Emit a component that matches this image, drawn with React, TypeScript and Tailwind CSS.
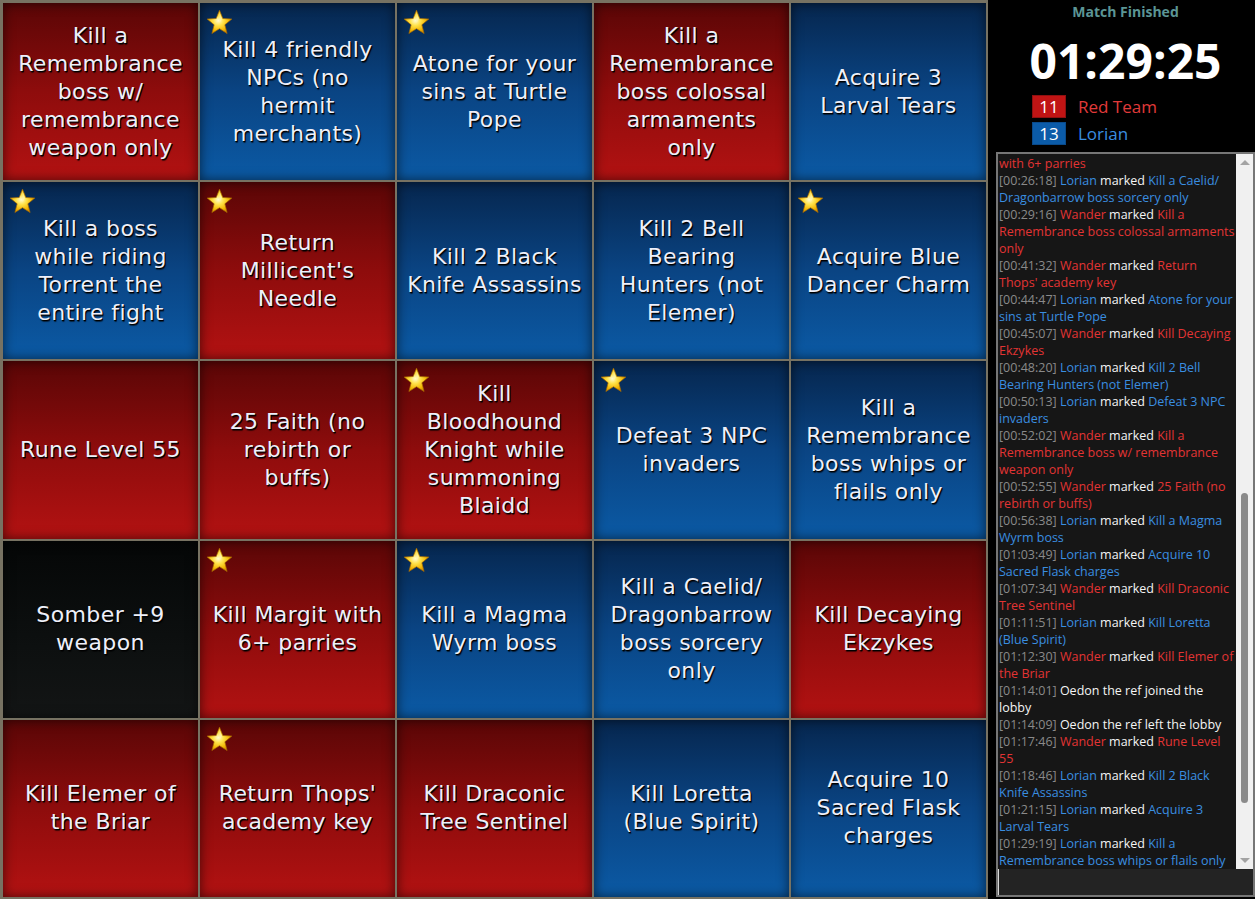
import React from "react";

type Cell = { t: string[]; c: "r" | "b" | "k"; s?: boolean };

const cells: Cell[] = [
  { t: ["Kill a", "Remembrance", "boss w/", "remembrance", "weapon only"], c: "r" },
  { t: ["Kill 4 friendly", "NPCs (no", "hermit", "merchants)"], c: "b", s: true },
  { t: ["Atone for your", "sins at Turtle", "Pope"], c: "b", s: true },
  { t: ["Kill a", "Remembrance", "boss colossal", "armaments", "only"], c: "r" },
  { t: ["Acquire 3", "Larval Tears"], c: "b" },
  { t: ["Kill a boss", "while riding", "Torrent the", "entire fight"], c: "b", s: true },
  { t: ["Return", "Millicent's", "Needle"], c: "r", s: true },
  { t: ["Kill 2 Black", "Knife Assassins"], c: "b" },
  { t: ["Kill 2 Bell", "Bearing", "Hunters (not", "Elemer)"], c: "b" },
  { t: ["Acquire Blue", "Dancer Charm"], c: "b", s: true },
  { t: ["Rune Level 55"], c: "r" },
  { t: ["25 Faith (no", "rebirth or", "buffs)"], c: "r" },
  { t: ["Kill", "Bloodhound", "Knight while", "summoning", "Blaidd"], c: "r", s: true },
  { t: ["Defeat 3 NPC", "invaders"], c: "b", s: true },
  { t: ["Kill a", "Remembrance", "boss whips or", "flails only"], c: "b" },
  { t: ["Somber +9", "weapon"], c: "k" },
  { t: ["Kill Margit with", "6+ parries"], c: "r", s: true },
  { t: ["Kill a Magma", "Wyrm boss"], c: "b", s: true },
  { t: ["Kill a Caelid/", "Dragonbarrow", "boss sorcery", "only"], c: "b" },
  { t: ["Kill Decaying", "Ekzykes"], c: "r" },
  { t: ["Kill Elemer of", "the Briar"], c: "r" },
  { t: ["Return Thops'", "academy key"], c: "r", s: true },
  { t: ["Kill Draconic", "Tree Sentinel"], c: "r" },
  { t: ["Kill Loretta", "(Blue Spirit)"], c: "b" },
  { t: ["Acquire 10", "Sacred Flask", "charges"], c: "b" },
];

const bgClass: Record<string, string> = {
  r: "bg-[linear-gradient(to_bottom,#5a0606,#8e0c0c_50%,#b31212)]",
  b: "bg-[linear-gradient(to_bottom,#06264e,#0a4483_50%,#0b5aa5)]",
  k: "bg-[linear-gradient(to_bottom,#050707,#0d1010_60%,#131515)]",
};

function Star() {
  return (
    <svg width="27" height="27" viewBox="0 0 24 24" className="absolute left-[6px] top-[6px]">
      <defs>
        <radialGradient id="sg" cx="0.45" cy="0.45" r="0.6">
          <stop offset="0" stopColor="#fffbd0" />
          <stop offset="0.35" stopColor="#ffe24a" />
          <stop offset="0.75" stopColor="#f2b400" />
          <stop offset="1" stopColor="#c57f00" />
        </radialGradient>
      </defs>
      <polygon
        points="12,1 14.94,8.46 22.94,8.95 16.76,14.05 18.76,21.8 12,17.5 5.24,21.8 7.24,14.05 1.06,8.95 9.06,8.46"
        fill="url(#sg)"
        stroke="#a86a00"
        strokeWidth="0.6"
        strokeLinejoin="round"
      />
      <polygon points="12,3 12,12.5 14.2,9.2" fill="#fff7c0" opacity="0.55" />
    </svg>
  );
}

const T = "#8a8a8a";
const L = "#3a8ee0";
const R = "#e23434";
const W = "#f4f4f4";

type Seg = [string, string];
const chat: Seg[][] = [
  [["with 6+ parries", R]],
  [["[00:26:18] ", T], ["Lorian", L], [" marked ", W], ["Kill a Caelid/", L]],
  [["Dragonbarrow boss sorcery only", L]],
  [["[00:29:16] ", T], ["Wander", R], [" marked ", W], ["Kill a", R]],
  [["Remembrance boss colossal armaments", R]],
  [["only", R]],
  [["[00:41:32] ", T], ["Wander", R], [" marked ", W], ["Return", R]],
  [["Thops' academy key", R]],
  [["[00:44:47] ", T], ["Lorian", L], [" marked ", W], ["Atone for your", L]],
  [["sins at Turtle Pope", L]],
  [["[00:45:07] ", T], ["Wander", R], [" marked ", W], ["Kill Decaying", R]],
  [["Ekzykes", R]],
  [["[00:48:20] ", T], ["Lorian", L], [" marked ", W], ["Kill 2 Bell", L]],
  [["Bearing Hunters (not Elemer)", L]],
  [["[00:50:13] ", T], ["Lorian", L], [" marked ", W], ["Defeat 3 NPC", L]],
  [["invaders", L]],
  [["[00:52:02] ", T], ["Wander", R], [" marked ", W], ["Kill a", R]],
  [["Remembrance boss w/ remembrance", R]],
  [["weapon only", R]],
  [["[00:52:55] ", T], ["Wander", R], [" marked ", W], ["25 Faith (no", R]],
  [["rebirth or buffs)", R]],
  [["[00:56:38] ", T], ["Lorian", L], [" marked ", W], ["Kill a Magma", L]],
  [["Wyrm boss", L]],
  [["[01:03:49] ", T], ["Lorian", L], [" marked ", W], ["Acquire 10", L]],
  [["Sacred Flask charges", L]],
  [["[01:07:34] ", T], ["Wander", R], [" marked ", W], ["Kill Draconic", R]],
  [["Tree Sentinel", R]],
  [["[01:11:51] ", T], ["Lorian", L], [" marked ", W], ["Kill Loretta", L]],
  [["(Blue Spirit)", L]],
  [["[01:12:30] ", T], ["Wander", R], [" marked ", W], ["Kill Elemer of", R]],
  [["the Briar", R]],
  [["[01:14:01] ", T], ["Oedon the ref joined the", W]],
  [["lobby", W]],
  [["[01:14:09] ", T], ["Oedon the ref left the lobby", W]],
  [["[01:17:46] ", T], ["Wander", R], [" marked ", W], ["Rune Level", R]],
  [["55", R]],
  [["[01:18:46] ", T], ["Lorian", L], [" marked ", W], ["Kill 2 Black", L]],
  [["Knife Assassins", L]],
  [["[01:21:15] ", T], ["Lorian", L], [" marked ", W], ["Acquire 3", L]],
  [["Larval Tears", L]],
  [["[01:29:19] ", T], ["Lorian", L], [" marked ", W], ["Kill a", L]],
  [["Remembrance boss whips or flails only", L]],
];

export default function App() {
  return (
    <div className="flex h-[899px] w-[1255px] overflow-hidden bg-black">
      <div className="grid h-[899px] w-[988px] shrink-0 grid-cols-5 grid-rows-5 gap-[2px] bg-[#777262] pb-[2px] pl-[3px] pr-[2px] pt-[3px]">
        {cells.map((cell, i) => (
          <div
            key={i}
            className={`relative flex flex-col items-center justify-center overflow-hidden text-center shadow-[inset_0_0_12px_rgba(0,0,0,0.6)] ${bgClass[cell.c]}`}
          >
            {cell.s && <Star />}
            {cell.t.map((ln, j) => (
              <div
                key={j}
                className="whitespace-nowrap font-['DejaVu_Sans',sans-serif] text-[22px] leading-[28px] tracking-[0.4px] text-[#eef0fa] [text-shadow:1px_1px_0_#000,1px_2px_1px_rgba(0,0,0,0.6)]"
              >
                {ln}
              </div>
            ))}
          </div>
        ))}
      </div>

      <div className="flex min-w-0 flex-1 flex-col pl-[8px] font-['Open_Sans',sans-serif]">
        <div className="pt-[3px] text-center text-[14px] font-bold leading-[18px] text-[#5b9595]">Match Finished</div>
        <div className="mt-[16px] text-center text-[48px] font-bold leading-[48px] text-white">01:29:25</div>
        <div className="mt-[10px] flex flex-col gap-[4px] pl-[36px]">
          <div className="flex items-center gap-[12px]">
            <div className="flex h-[23px] w-[34px] items-center justify-center border border-[#8e1010] bg-[#c01414] text-[17px] leading-none text-white">11</div>
            <span className="text-[17px] leading-[23px] text-[#e03a3a]">Red Team</span>
          </div>
          <div className="flex items-center gap-[12px]">
            <div className="flex h-[23px] w-[34px] items-center justify-center border border-[#0a4a8a] bg-[#0b5ba8] text-[17px] leading-none text-white">13</div>
            <span className="text-[17px] leading-[23px] text-[#3a8ee0]">Lorian</span>
          </div>
        </div>

        <div className="mt-[7px] flex h-[745px] flex-col border-2 border-[#767676] bg-[#161616]">
          <div className="flex min-h-0 flex-1">
            <div className="flex min-w-0 flex-1 flex-col justify-end overflow-hidden pl-[1px]">
              {chat.map((line, i) => (
                <div key={i} className="whitespace-nowrap text-[12.5px] leading-[17px]">
                  {line.map((seg, j) => (
                    <span key={j} style={{ color: seg[1] }}>
                      {seg[0]}
                    </span>
                  ))}
                </div>
              ))}
            </div>
            <div className="flex w-[17px] shrink-0 flex-col items-center bg-[#f0f0f0]">
              <div className="flex h-[17px] w-full items-center justify-center">
                <div className="h-0 w-0 border-x-[5px] border-b-[5px] border-x-transparent border-b-[#a3a3a3]" />
              </div>
              <div className="mt-[322px] h-[310px] w-[7px] rounded-[4px] bg-[#8a8a8a]" />
              <div className="flex-1" />
              <div className="flex h-[17px] w-full items-center justify-center">
                <div className="h-0 w-0 border-x-[5px] border-t-[5px] border-x-transparent border-t-[#a3a3a3]" />
              </div>
            </div>
          </div>
          <div className="h-[26px] shrink-0 border-l border-[#d8d8d8] bg-[#232323]" />
        </div>
      </div>
    </div>
  );
}
